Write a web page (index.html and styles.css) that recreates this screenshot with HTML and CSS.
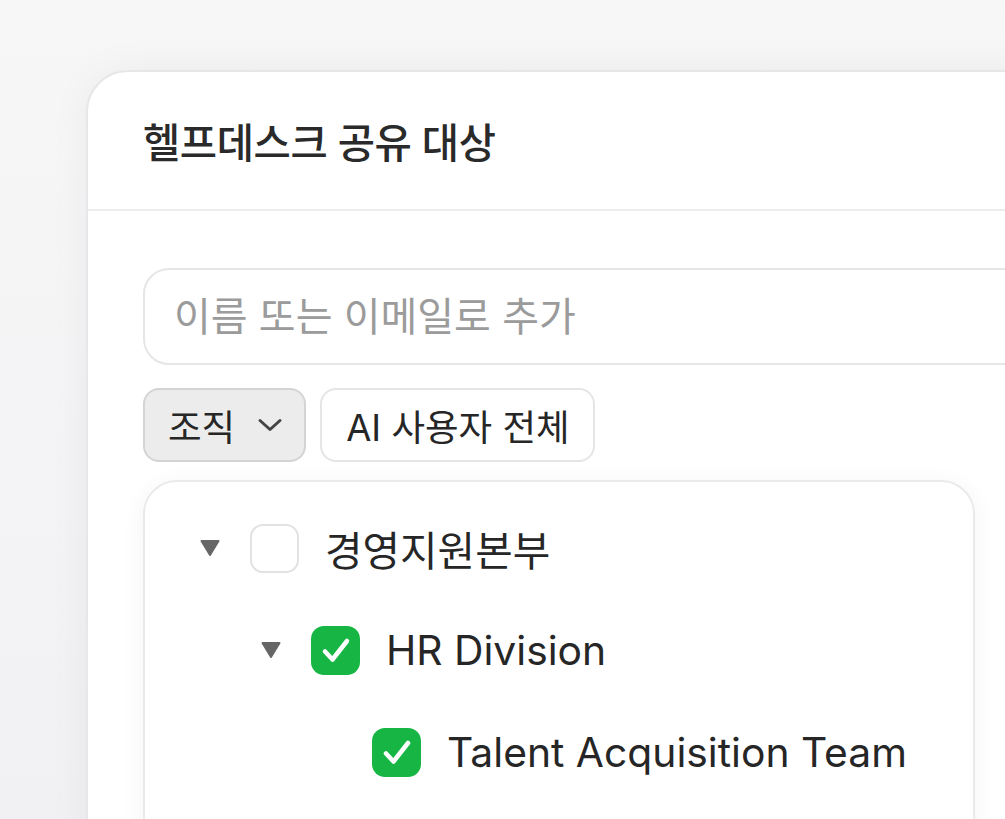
FILE: index.html
```html
<!DOCTYPE html>
<html lang="ko">
<head>
    <meta charset="UTF-8">
    <meta name="viewport" content="width=device-width, initial-scale=1.0">
    <title>헬프데스크 공유 대상</title>
    <link rel="stylesheet" href="styles.css">
</head>
<body>
    <main class="card">
        <div class="card-header">
            <h1>헬프데스크 공유 대상</h1>
        </div>
        <div class="card-body">
            <div class="search">
                <input type="text" placeholder="이름 또는 이메일로 추가">
            </div>

            <div class="chips">
                <button class="chip chip-active">
                    조직
                    <svg class="chevron" width="26" height="14" viewBox="0 0 26 14">
                        <path d="M3 2.5 L13 11.5 L23 2.5" fill="none" stroke="#444" stroke-width="3" stroke-linecap="round" stroke-linejoin="round"/>
                    </svg>
                </button>
                <button class="chip">AI 사용자 전체</button>
            </div>

            <div class="panel">
                <ul class="tree">
                    <li>
                        <div class="row">
                            <svg class="caret" width="22" height="18" viewBox="0 0 22 18">
                                <path d="M2.5 2 H19.5 L11 16 Z" fill="#666" stroke="#666" stroke-width="2" stroke-linejoin="round"/>
                            </svg>
                            <span class="box"></span>
                            <span class="label">경영지원본부</span>
                        </div>
                        <ul class="tree">
                            <li>
                                <div class="row">
                                    <svg class="caret" width="22" height="18" viewBox="0 0 22 18">
                                        <path d="M2.5 2 H19.5 L11 16 Z" fill="#666" stroke="#666" stroke-width="2" stroke-linejoin="round"/>
                                    </svg>
                                    <span class="box checked">
                                        <svg width="49" height="49" viewBox="0 0 49 49">
                                            <path d="M14 25.5 L21.5 33.5 L36 15" fill="none" stroke="#fff" stroke-width="4.5" stroke-linecap="round" stroke-linejoin="round"/>
                                        </svg>
                                    </span>
                                    <span class="label">HR Division</span>
                                </div>
                                <ul class="tree">
                                    <li>
                                        <div class="row">
                                            <span class="caret-space"></span>
                                            <span class="box checked">
                                                <svg width="49" height="49" viewBox="0 0 49 49">
                                                    <path d="M14 25.5 L21.5 33.5 L36 15" fill="none" stroke="#fff" stroke-width="4.5" stroke-linecap="round" stroke-linejoin="round"/>
                                                </svg>
                                            </span>
                                            <span class="label">Talent Acquisition Team</span>
                                        </div>
                                    </li>
                                </ul>
                            </li>
                        </ul>
                    </li>
                </ul>
            </div>
        </div>
    </main>
</body>
</html>
```

FILE: styles.css
```css
body {
    font-family: "Inter", "Noto Sans CJK KR", sans-serif;
    background: linear-gradient(#f7f7f8, #f1f1f3);
    color: #262626;
    margin: 0;
    padding: 70px 0 0 86px;
    height: 819px;
    box-sizing: border-box;
    overflow: hidden;
}
.card {
    width: 1100px;
    height: 900px;
    background: #fff;
    border: 2px solid #e7e7e9;
    border-radius: 42px 0 0 0;
    box-shadow: 0 0 40px rgba(0, 0, 0, 0.05);
}
.card-header {
    height: 137px;
    display: flex;
    align-items: center;
    padding-left: 55px;
    border-bottom: 2px solid #ececee;
}
h1 {
    margin: 0;
    font-size: 40.5px;
    font-weight: 500;
    color: #2a2a2a;
    letter-spacing: -0.4px;
}
.card-body {
    padding: 57px 0 0 55px;
}
.search {
    width: 960px;
    height: 97px;
    box-sizing: border-box;
    border: 2px solid #e6e6e6;
    border-radius: 26px;
    display: flex;
    align-items: center;
    padding-left: 29px;
}
.search input {
    border: none;
    outline: none;
    width: 100%;
    font-family: inherit;
    font-size: 40px;
    color: #333;
    background: transparent;
    padding: 0;
}
.search input::placeholder {
    color: #9b9b9b;
}
.chips {
    display: flex;
    gap: 14px;
    margin-top: 23px;
}
.chip {
    height: 74px;
    box-sizing: border-box;
    display: flex;
    align-items: center;
    gap: 22px;
    padding: 0 23px 0 24px;
    font-family: inherit;
    font-size: 36.5px;
    color: #262626;
    background: #fff;
    border: 2px solid #e5e5e5;
    border-radius: 16px;
}
.chip-active {
    background: #ececec;
    border-color: #d4d4d4;
    padding: 0 21px 0 23px;
}
.panel {
    width: 832px;
    height: 500px;
    margin-top: 18px;
    box-sizing: border-box;
    border: 2px solid #eaeaea;
    border-radius: 34px;
    box-shadow: 0 4px 24px rgba(0, 0, 0, 0.05);
    padding: 15px 0 0 54px;
}
.tree {
    list-style: none;
    margin: 0;
    padding: 0;
}
.tree .tree {
    padding-left: 61px;
}
.row {
    height: 102px;
    display: flex;
    align-items: center;
}
.caret, .caret-space {
    width: 22px;
    height: 18px;
    margin-right: 29px;
    flex-shrink: 0;
}
.box {
    width: 49px;
    height: 49px;
    box-sizing: border-box;
    border: 2.5px solid #e2e2e2;
    border-radius: 13px;
    margin-right: 26px;
    flex-shrink: 0;
}
.box.checked {
    background: #17b644;
    border: none;
}
.box svg {
    display: block;
}
.label {
    font-size: 40.8px;
    color: #262626;
}
```
